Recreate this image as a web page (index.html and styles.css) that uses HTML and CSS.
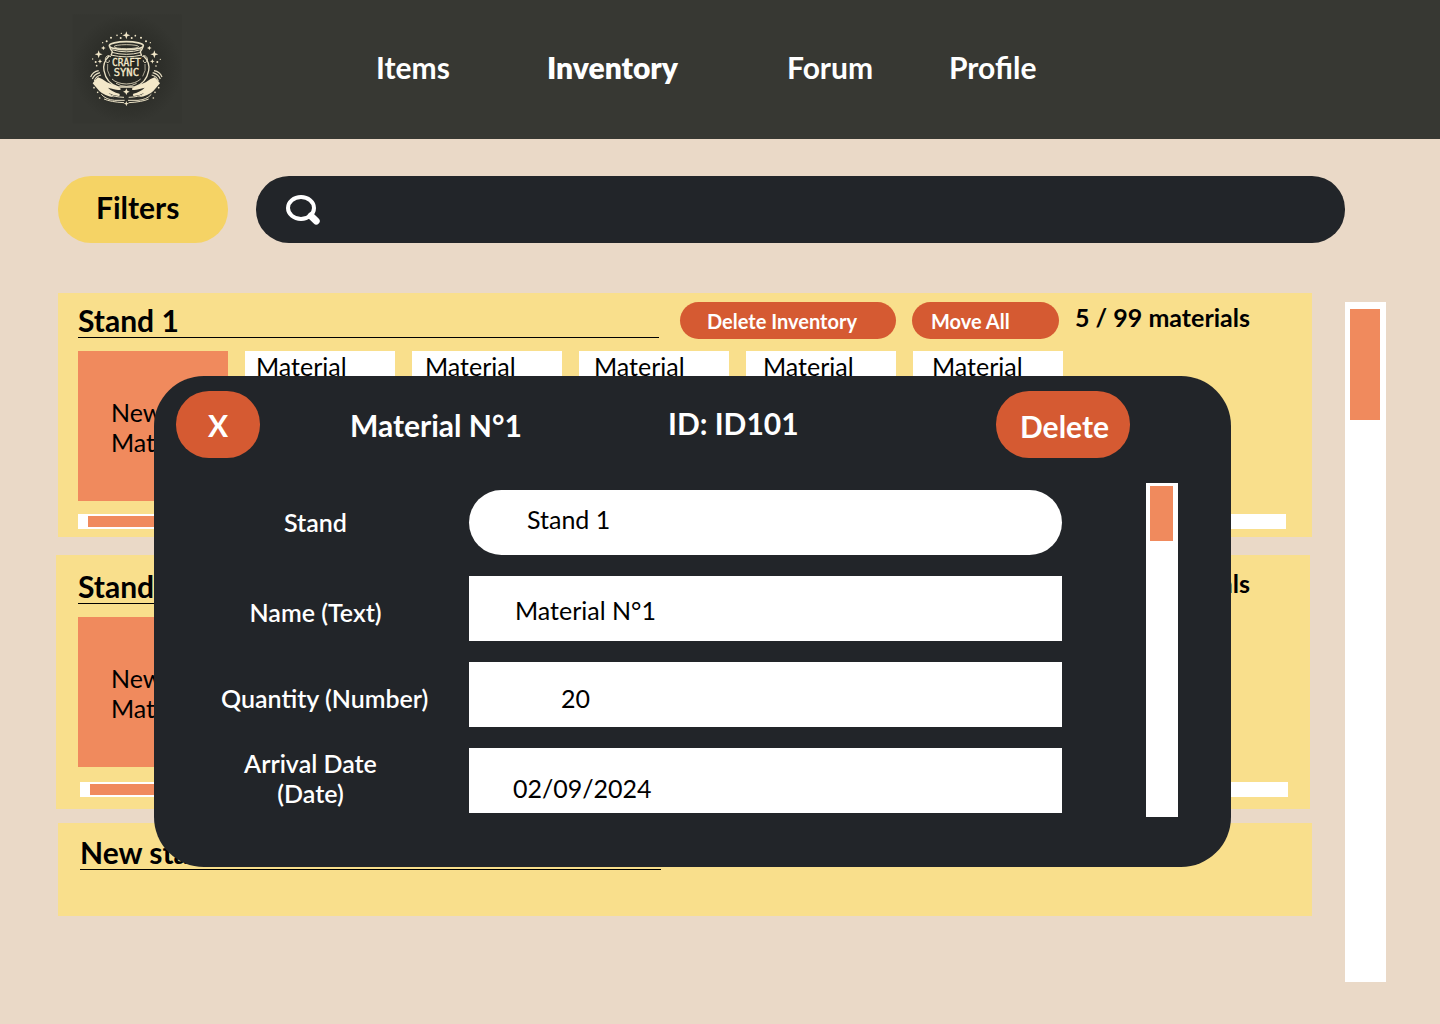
FILE: index.html
```html
<!DOCTYPE html>
<html lang="en">
<head>
<meta charset="utf-8">
<title>Craft Sync – Inventory</title>
<link rel="stylesheet" href="styles.css">
</head>
<body>
<header class="topbar">
  <svg class="logo" viewBox="0 0 372 366" role="img" aria-label="Craft Sync">
    <defs>
      <radialGradient id="glow">
        <stop offset="0" stop-color="#23241f"/>
        <stop offset=".6" stop-color="#2d2e29"/>
        <stop offset="1" stop-color="#353631"/>
      </radialGradient>
    </defs>
    <rect x="20" y="13" width="328" height="328" fill="url(#glow)"/>
    <g fill="none" stroke="#e9e0c4" stroke-width="4">
      <ellipse cx="181" cy="107" rx="51" ry="12" stroke-width="5"/>
      <ellipse cx="181" cy="110" rx="37" ry="6" stroke-width="2.5"/>
      <path d="M131 111q4 10 8 14q-2 8-4 12M231 111q-4 10-8 14q2 8 4 12"/>
      <path d="M137 119q44 13 88 0M137 127q44 12 88 0M134 135q47 11 94 0" stroke-width="3"/>
      <path d="M130 137q-21 20-16 45q7 38 42 49h50q35-11 42-49q5-25-16-45"/>
      <path d="M135 141c-8-8-18-2-17 9c1 10 13 10 12 1M227 141c8-8 18-2 17 9c-1 10-13 10-12 1" stroke-width="3"/>
      <path d="M125 162q-4 20 7 37M237 162q4 20-7 37" stroke-width="2"/>
      <path d="M138 207q15 14 43 15q28-1 43-15M150 220q15 9 31 9q16 0 31-9" stroke-width="2.5"/>
    </g>
    <g fill="#f3e8c9">
      <path d="M96 202q16 5 27 15l34 14q9 4 7 8q-8 2-20-1l-18-5q12 12 34 18q4 6-2 7q-17-2-30-9q8 9 17 13q-30-4-45-19l-20-23q6-9 16-18z"/>
      <path d="M266 202q-16 5-27 15l-34 14q-9 4-7 8q8 2 20-1l18-5q-12 12-34 18q-4 6 2 7q17-2 30-9q-8 9-17 13q30-4 45-19l20-23q-6-9-16-18z"/>
    </g>
    <g fill="none" stroke="#e9e0c4" stroke-width="3.5">
      <path d="M98 182q-18 3-24 19M102 188q-18 5-23 19M105 195q-16 4-20 18"/>
      <path d="M264 182q18 3 24 19M260 188q18 5 23 19M257 195q16 4 20 18"/>
      <path d="M106 253q14 16 40 18h30M114 267q20 9 60 11M128 252q16 9 46 10" stroke-width="3"/>
      <path d="M256 253q-14 16-40 18h-30M248 267q-20 9-60 11M234 252q-16 9-46 10" stroke-width="3"/>
    </g>
    <g fill="#f3e8c9">
      <path d="M181 64l3 9 9 3-9 3-3 9-3-9-9-3 9-3z"/>
      <path d="M98 121l3 9 9 3-9 3-3 9-3-9-9-3 9-3z"/>
      <path d="M265 121l3 9 9 3-9 3-3 9-3-9-9-3 9-3z"/>
      <path d="M181 235l3 7 7 3-7 3-3 7-3-7-7-3 7-3z"/>
      <path d="M181 273l2 6 6 2-6 2-2 6-2-6-6-2 6-2z"/>
      <path d="M112 107l2 5 5 2-5 2-2 5-2-5-5-2 5-2zM250 107l2 5 5 2-5 2-2 5-2-5-5-2 5-2zM102 147l2 5 5 2-5 2-2 5-2-5-5-2 5-2zM259 147l2 5 5 2-5 2-2 5-2-5-5-2 5-2z"/>
      <g>
        <circle cx="153" cy="76" r="2.5"/><circle cx="166" cy="70" r="2"/><circle cx="164" cy="84" r="3"/>
        <circle cx="197" cy="84" r="3"/><circle cx="208" cy="77" r="2.5"/><circle cx="135" cy="83" r="3"/>
        <circle cx="225" cy="83" r="3"/><circle cx="122" cy="94" r="3"/><circle cx="240" cy="94" r="3"/>
        <circle cx="110" cy="98" r="2"/><circle cx="253" cy="98" r="2"/><circle cx="89" cy="156" r="3"/>
        <circle cx="274" cy="156" r="3"/><circle cx="92" cy="167" r="2.5"/><circle cx="270" cy="168" r="2.5"/>
        <circle cx="283" cy="148" r="2"/><circle cx="80" cy="147" r="2"/><circle cx="84" cy="233" r="2.5"/>
        <circle cx="278" cy="233" r="2.5"/><circle cx="95" cy="247" r="2.5"/><circle cx="267" cy="247" r="2.5"/>
        <circle cx="101" cy="264" r="2.5"/><circle cx="262" cy="264" r="2.5"/>
      </g>
    </g>
    <g class="logo-text">
      <text x="181" y="168" textLength="86" lengthAdjust="spacingAndGlyphs">CRAFT</text>
      <text x="181" y="199" textLength="76" lengthAdjust="spacingAndGlyphs">SYNC</text>
    </g>
  </svg>
  <nav class="nav">
    <a class="nav-items">Items</a>
    <a class="nav-inventory">Inventory</a>
    <a class="nav-forum">Forum</a>
    <a class="nav-profile">Profile</a>
  </nav>
</header>

<div class="toolbar">
  <div class="filters">Filters</div>
  <div class="search">
    <svg class="search-icon" width="40" height="36" viewBox="0 0 40 36">
      <ellipse cx="17" cy="16" rx="13" ry="11" fill="none" stroke="#fff" stroke-width="4"/>
      <path d="M27 24L32.200 29" stroke="#fff" stroke-width="7" stroke-linecap="round"/>
    </svg>
  </div>
</div>

<main class="content">
  <div class="stands">
    <section class="stand stand-one">
      <div class="stand-head">
        <h2>Stand 1</h2>
        <div class="pill pill-delete">Delete Inventory</div>
        <div class="pill pill-move">Move All</div>
        <p class="count">5 / 99 materials</p>
      </div>
      <div class="tiles">
        <div class="tile tile-new">New<br>Material</div>
        <div class="tile m1">Material</div>
        <div class="tile m2">Material</div>
        <div class="tile m3">Material</div>
        <div class="tile m4">Material</div>
        <div class="tile m5">Material</div>
      </div>
      <div class="hscroll"><div class="hthumb"></div></div>
    </section>
    <section class="stand stand-two">
      <div class="stand-head">
        <h2>Stand 2</h2>
        <p class="count">5 / 99 materials</p>
      </div>
      <div class="tiles">
        <div class="tile tile-new">New<br>Material</div>
      </div>
      <div class="hscroll"><div class="hthumb"></div></div>
    </section>
    <section class="stand stand-new">
      <h2>New stand</h2>
    </section>
  </div>
  <div class="vscroll"><div class="vthumb"></div></div>
</main>

<div class="modal">
  <div class="modal-head">
    <div class="btn btn-close">X</div>
    <div class="modal-title">Material N°1</div>
    <div class="modal-id">ID: ID101</div>
    <div class="btn btn-delete">Delete</div>
  </div>
  <div class="modal-body">
    <div class="form">
      <div class="label label-stand">Stand</div>
      <div class="field field-stand">Stand 1</div>
      <div class="label label-name">Name (Text)</div>
      <div class="field field-name">Material N°1</div>
      <div class="label label-qty">Quantity (Number)</div>
      <div class="field field-qty">20</div>
      <div class="label label-date">Arrival Date<br>(Date)</div>
      <div class="field field-date">02/09/2024</div>
    </div>
    <div class="mscroll"><div class="mthumb"></div></div>
  </div>
</div>
</body>
</html>
```
FILE: styles.css
```css
* { box-sizing: border-box; }

body {
  margin: 0;
  width: 1440px;
  height: 1024px;
  overflow: hidden;
  position: relative;
  background: #ead9c7;
  color: #000;
  font-family: Lato, "Liberation Sans", sans-serif;
  font-size: 25px;
  line-height: 30px;
}

h2, p { margin: 0; }

/* Header */
.topbar {
  display: flex;
  align-items: flex-start;
  height: 139px;
  padding: 10px 0 0 66px;
  background: #373833;
}
.logo { width: 124px; height: 122px; flex: none; }
.logo-text {
  font: 400 31px "DejaVu Sans Mono", monospace;
  fill: #f3e8c9;
  stroke: #f3e8c9;
  stroke-width: 1px;
  text-anchor: middle;
}
.nav {
  display: grid;
  grid-template-columns: 171px 240px 162px auto;
  margin: 39px 0 0 186px;
  color: #fff;
  font-size: 30px;
  font-weight: 700;
  line-height: 36px;
}
.nav-inventory { font-weight: 800; }

/* Filter button and search */
.toolbar {
  display: flex;
  gap: 28px;
  padding: 37px 0 0 58px;
}
.filters {
  width: 170px;
  height: 67px;
  padding: 13px 0 0 38px;
  border-radius: 33px;
  background: #f5d365;
  font-size: 30px;
  font-weight: 700;
  line-height: 36px;
}
.search {
  width: 1089px;
  height: 67px;
  padding: 16px 0 0 28px;
  border-radius: 33px;
  background: #222529;
}
.search-icon { display: block; }

/* Stands */
.content { display: flex; align-items: flex-start; padding-top: 50px; }
.stands { width: 1345px; padding-left: 56px; }
.stand { width: 1254px; background: #f9df8c; }
.stand h2 {
  width: 581px;
  height: 36px;
  font-size: 30px;
  font-weight: 700;
  line-height: 36px;
  border-bottom: 1px solid #000;
}
.stand-one { height: 244px; margin-left: 2px; padding: 9px 0 0 20px; }
.stand-two { height: 254px; margin-top: 18px; padding: 13px 0 0 22px; }
.stand-new { height: 93px; margin: 14px 0 0 2px; padding: 11px 0 0 22px; }
.stand-head { display: flex; height: 49px; }
.pill {
  height: 37px;
  padding-top: 7px;
  border-radius: 18.5px;
  background: #d55a32;
  color: #fff;
  font-size: 20px;
  font-weight: 700;
  line-height: 24px;
}
.pill-delete { width: 216px; margin-left: 21px; padding-left: 27px; }
.pill-move { width: 147px; margin-left: 16px; padding-left: 19px; }
.count { margin-left: 16px; font-weight: 700; }
.stand-two .count { margin-left: 416px; }
.tiles { display: flex; gap: 17px; }
.tile { width: 150px; height: 150px; background: #fff; }
.tile-new { padding: 46px 0 0 33px; background: #f08a5d; }
.m1 { padding-left: 11px; }
.m2 { padding-left: 13px; }
.m3 { padding-left: 15px; }
.m4 { padding-left: 17px; }
.m5 { padding-left: 19px; }
.hscroll { width: 1208px; height: 15px; margin-top: 13px; padding: 2px 10px; background: #fff; }
.stand-two .hscroll { margin: 15px 0 0 2px; }
.hthumb { width: 300px; height: 11px; background: #f08a5d; }
.vscroll { width: 41px; height: 680px; margin-top: 9px; padding: 7px 5px; background: #fff; }
.vthumb { width: 30px; height: 111px; background: #f08a5d; }

/* Material dialog, over the page */
.modal {
  position: absolute;
  left: 154px;
  top: 376px;
  width: 1077px;
  height: 491px;
  padding: 15px 53px 0 22px;
  border-radius: 50px;
  background: #222529;
  color: #fff;
}
.modal-head {
  display: flex;
  height: 92px;
  font-size: 30px;
  font-weight: 700;
  line-height: 36px;
}
.btn { height: 67px; border-radius: 33px; background: #d55a32; }
.btn-close { width: 84px; padding: 16px 0 0 32px; }
.modal-title { width: 318px; padding: 16px 0 0 90px; }
.modal-id { width: 418px; padding: 14px 0 0 90px; }
.btn-delete { width: 134px; padding: 17px 0 0 24px; }
.modal-body { display: flex; justify-content: space-between; }
.form {
  display: grid;
  grid-template-columns: 293px 593px;
  grid-auto-rows: 65px;
  row-gap: 21px;
  padding-top: 7px;
}
.label { font-weight: 600; white-space: nowrap; }
.label-stand { padding: 17px 0 0 108px; }
.label-name { padding: 21px 0 0 73.5px; }
.label-qty { padding: 21px 0 0 45px; }
.label-date { width: 269px; text-align: center; }
.field { background: #fff; color: #000; }
.field-stand { padding: 14px 0 0 58px; border-radius: 33px; }
.field-name { padding: 19px 0 0 46px; }
.field-qty { padding: 21px 0 0 92px; }
.field-date { padding: 25px 0 0 44px; }
.mscroll { width: 32px; height: 334px; padding: 3px 4px; background: #fff; }
.mthumb { width: 23px; height: 55px; background: #f08a5d; }
```
